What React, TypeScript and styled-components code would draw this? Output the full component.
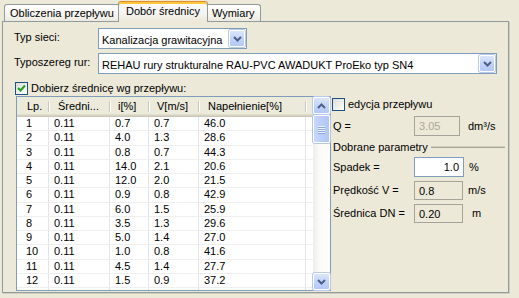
import React from "react";
import styled, { createGlobalStyle } from "styled-components";

type Row = [string, string, string, string, string];

const rows: Row[] = [
  ["1", "0.11", "0.7", "0.7", "46.0"],
  ["2", "0.11", "4.0", "1.3", "28.6"],
  ["3", "0.11", "0.8", "0.7", "44.3"],
  ["4", "0.11", "14.0", "2.1", "20.6"],
  ["5", "0.11", "12.0", "2.0", "21.5"],
  ["6", "0.11", "0.9", "0.8", "42.9"],
  ["7", "0.11", "6.0", "1.5", "25.9"],
  ["8", "0.11", "3.5", "1.3", "29.6"],
  ["9", "0.11", "5.0", "1.4", "27.0"],
  ["10", "0.11", "1.0", "0.8", "41.6"],
  ["11", "0.11", "4.5", "1.4", "27.7"],
  ["12", "0.11", "1.5", "0.9", "37.2"],
  ["13", "0.11", "11.5", "1.9", "22.0"],
];

type Col = { title: string; w: number; pad: number; hpad: number };
const cols: Col[] = [
  { title: "Lp.", w: 32, pad: 9, hpad: 10 },
  { title: "Średni...", w: 61, pad: 5, hpad: 9 },
  { title: "i[%]", w: 39, pad: 5, hpad: 8 },
  { title: "V[m/s]", w: 50, pad: 5, hpad: 8 },
  { title: "Napełnienie[%]", w: 107, pad: 5, hpad: 9 },
];

const GlobalStyle = createGlobalStyle`
  html, body {
    margin: 0;
    padding: 0;
    background: #ece9d8;
  }
  body {
    font-family: "Liberation Sans", Arial, sans-serif;
    font-size: 11px;
    color: #000;
  }
`;

const Window = styled.div`
  width: 519px;
  height: 298px;
  box-sizing: border-box;
  padding: 1px 0 0 2px;
  background: #ece9d8;
  overflow: hidden;
`;

const TabStrip = styled.div`
  display: flex;
  align-items: flex-end;
  height: 20px;
  padding-left: 2px;
  position: relative;
  z-index: 1;
`;

const Tab = styled.div<{ $active?: boolean }>`
  box-sizing: border-box;
  height: ${({ $active }) => ($active ? 21 : 17)}px;
  margin: 0 ${({ $active }) => ($active ? -2 : 0)}px
    ${({ $active }) => ($active ? -1 : 0)}px;
  padding: ${({ $active }) => ($active ? "2px 7px 0" : "1px 5px 0")};
  border: 1px solid #919b9c;
  border-bottom: none;
  border-radius: 3px 3px 0 0;
  white-space: nowrap;
  position: relative;
  z-index: ${({ $active }) => ($active ? 2 : 1)};
  background: ${({ $active }) =>
    $active
      ? "linear-gradient(#fcfcfe, #f4f3ee 60%, #ece9d8)"
      : "linear-gradient(#ffffff, #f3f2ec 70%, #ebe9e0)"};
  ${({ $active }) =>
    $active
      ? `border-top: 1px solid #e68b2c; box-shadow: inset 0 2px 0 #ffc73c;`
      : ""}
  line-height: 14px;
`;

const Panel = styled.div`
  box-sizing: border-box;
  width: 507px;
  height: 272px;
  border: 1px solid #919b9c;
  box-shadow: 1px 1px 0 #d0cebf;
  background: #ece9d8;
  padding: 6px 0 0 11px;
`;

const FormRow = styled.div<{ $gap?: number }>`
  display: flex;
  align-items: flex-start;
  height: 21px;
  margin-top: ${({ $gap }) => $gap ?? 0}px;
`;

const FormLabel = styled.div`
  width: 84px;
  padding-top: 3px;
  white-space: nowrap;
`;

const Combo = styled.div<{ $w: number }>`
  box-sizing: border-box;
  width: ${({ $w }) => $w}px;
  height: 21px;
  border: 1px solid #7f9db9;
  background: #fff;
  display: flex;
  align-items: center;
  padding: 1px 1px 1px 3px;
`;

const ComboText = styled.span`
  flex: 1;
  padding-top: 2px;
  white-space: nowrap;
  overflow: hidden;
`;

const ArrowButton = styled.div<{ $w?: number; $h?: number }>`
  box-sizing: border-box;
  width: ${({ $w }) => $w ?? 16}px;
  height: ${({ $h }) => $h ?? 17}px;
  border: 1px solid #fff;
  border-radius: 2px;
  background: linear-gradient(#dbe5fc, #c3d4fa 50%, #b4c8f6);
  box-shadow: 0 0 0 1px #b9c9ef;
  display: flex;
  align-items: center;
  justify-content: center;
`;

const CheckRow = styled.div<{ $gap?: number; $indent?: number }>`
  display: flex;
  align-items: center;
  height: 14px;
  margin-top: ${({ $gap }) => $gap ?? 0}px;
  margin-left: ${({ $indent }) => $indent ?? 0}px;
  white-space: nowrap;
`;

const CheckBox = styled.div`
  box-sizing: border-box;
  width: 13px;
  height: 13px;
  border: 1px solid #1c5180;
  background: linear-gradient(135deg, #dcdcd7, #ffffff);
  margin-right: 3px;
  display: flex;
  align-items: center;
  justify-content: center;
`;

const Body = styled.div`
  display: flex;
  margin-top: 1px;
`;

const ListFrame = styled.div`
  box-sizing: border-box;
  display: flex;
  width: 315px;
  height: 195px;
  margin-left: 2px;
  border: 1px solid #7f9db9;
  background: #fff;
`;

const ListArea = styled.div`
  flex: 1;
  display: flex;
  flex-direction: column;
  overflow: hidden;
`;

const Header = styled.div`
  display: flex;
  height: 20px;
  flex-shrink: 0;
  background: #ebeadb;
  box-shadow: inset 0 -1px 0 #cbc7b8, inset 0 -2px 0 #d6d2c2,
    inset 0 -3px 0 #e2decd;
`;

const HeaderCell = styled.div<{ $w: number; $pad: number }>`
  box-sizing: border-box;
  width: ${({ $w }) => $w}px;
  flex-shrink: 0;
  padding-left: ${({ $pad }) => $pad}px;
  line-height: 19px;
  position: relative;
  white-space: nowrap;

  &::after {
    content: "";
    position: absolute;
    right: 0;
    top: 4px;
    bottom: 5px;
    width: 1px;
    background: #cbc7b8;
    box-shadow: 1px 0 0 #fff;
  }
`;

const Rows = styled.div`
  flex: 1;
  overflow: hidden;
`;

const DataRow = styled.div`
  display: flex;
  box-sizing: border-box;
  height: 14.25px;
  border-bottom: 1px solid #efefef;
`;

const Cell = styled.div<{ $w: number; $pad: number }>`
  box-sizing: border-box;
  width: ${({ $w }) => $w}px;
  flex-shrink: 0;
  padding-left: ${({ $pad }) => $pad}px;
  line-height: 13px;
  border-right: 1px solid #e4e4e4;
  white-space: nowrap;
`;

const ScrollBar = styled.div`
  width: 17px;
  display: flex;
  flex-direction: column;
  background: linear-gradient(90deg, #efeee7, #fbfbf9 40%, #fdfdfc);
`;

const ScrollTrack = styled.div`
  flex: 1;
  padding-top: 1px;
`;

const Thumb = styled.div`
  box-sizing: border-box;
  height: 28px;
  border: 1px solid #fff;
  border-radius: 2px;
  background: linear-gradient(90deg, #c9d8fc, #bacdf9 50%, #b0c6f7);
  box-shadow: 0 0 0 1px #b4c6ee;
  display: flex;
  flex-direction: column;
  align-items: center;
  justify-content: center;
  gap: 1px;
`;

const Grip = styled.div`
  width: 7px;
  height: 1px;
  background: #eef3fe;
  box-shadow: 0 1px 0 #8ca5da;
`;

const Side = styled.div`
  width: 173px;
  margin-left: 1px;
  display: flex;
  flex-direction: column;
`;

const FieldRow = styled.div<{ $gap: number }>`
  display: grid;
  grid-template-columns: 82px 53px auto;
  align-items: center;
  height: 20px;
  margin-top: ${({ $gap }) => $gap}px;
  white-space: nowrap;
`;

const FieldLabel = styled.div`
  padding-left: 1px;
`;

const Field = styled.div<{
  $w: number;
  $kind: "edit" | "disabled" | "readonly";
  $align?: "left" | "right";
}>`
  box-sizing: border-box;
  width: ${({ $w }) => $w}px;
  height: ${({ $kind }) => ($kind === "readonly" ? 19 : 20)}px;
  padding: 0 4px;
  line-height: 18px;
  text-align: ${({ $align }) => $align ?? "left"};
  border: 1px solid
    ${({ $kind }) => ($kind === "edit" ? "#7f9db9" : "#a5a39a")};
  background: ${({ $kind }) => ($kind === "edit" ? "#fff" : "#ece9d8")};
  color: ${({ $kind }) => ($kind === "disabled" ? "#aca899" : "#000")};
`;

const Unit = styled.div<{ $shift?: number }>`
  padding-left: ${({ $shift }) => $shift ?? 0}px;
`;

const GroupTitle = styled.div`
  display: flex;
  align-items: center;
  height: 14px;
  margin-top: 4px;
  padding-left: 1px;
  white-space: nowrap;
`;

const GroupLine = styled.div`
  flex: 1;
  height: 0;
  margin-left: 3px;
  border-top: 1px solid #d0d0bf;
  border-bottom: 1px solid #a9a796;
`;

const Chevron = ({ up }: { up?: boolean }) => (
  <svg width="9" height="6" viewBox="0 0 9 6">
    <polyline
      points={up ? "1,5 4.5,1.5 8,5" : "1,1 4.5,4.5 8,1"}
      fill="none"
      stroke="#4d6185"
      strokeWidth="2"
    />
  </svg>
);

const Tick = () => (
  <svg width="9" height="9" viewBox="0 0 9 9">
    <polyline
      points="1,4 3.5,6.5 8,1.5"
      fill="none"
      stroke="#21a121"
      strokeWidth="2"
    />
  </svg>
);

const App = () => {
  return (
    <Window>
      <GlobalStyle />
      <TabStrip>
        <Tab>Obliczenia przepływu</Tab>
        <Tab $active>Dobór średnicy</Tab>
        <Tab>Wymiary</Tab>
      </TabStrip>
      <Panel>
        <FormRow>
          <FormLabel>Typ sieci:</FormLabel>
          <Combo $w={149}>
            <ComboText>Kanalizacja grawitacyjna</ComboText>
            <ArrowButton>
              <Chevron />
            </ArrowButton>
          </Combo>
        </FormRow>
        <FormRow $gap={4}>
          <FormLabel>Typoszereg rur:</FormLabel>
          <Combo $w={399}>
            <ComboText>
              REHAU rury strukturalne RAU-PVC AWADUKT ProEko typ SN4
            </ComboText>
            <ArrowButton>
              <Chevron />
            </ArrowButton>
          </Combo>
        </FormRow>
        <CheckRow $gap={7} $indent={1}>
          <CheckBox>
            <Tick />
          </CheckBox>
          Dobierz średnicę wg przepływu:
        </CheckRow>
        <Body>
          <ListFrame>
            <ListArea>
              <Header>
                {cols.map((c) => (
                  <HeaderCell key={c.title} $w={c.w} $pad={c.hpad}>
                    {c.title}
                  </HeaderCell>
                ))}
              </Header>
              <Rows>
                {rows.map((r) => (
                  <DataRow key={r[0]}>
                    {r.map((v, i) => (
                      <Cell key={i} $w={cols[i].w} $pad={cols[i].pad}>
                        {v}
                      </Cell>
                    ))}
                  </DataRow>
                ))}
              </Rows>
            </ListArea>
            <ScrollBar>
              <ArrowButton $w={17} $h={17}>
                <Chevron up />
              </ArrowButton>
              <ScrollTrack>
                <Thumb>
                  <Grip />
                  <Grip />
                  <Grip />
                  <Grip />
                </Thumb>
              </ScrollTrack>
              <ArrowButton $w={17} $h={17}>
                <Chevron />
              </ArrowButton>
            </ScrollBar>
          </ListFrame>
          <Side>
            <CheckRow $gap={1}>
              <CheckBox />
              edycja przepływu
            </CheckRow>
            <FieldRow $gap={5}>
              <FieldLabel>Q =</FieldLabel>
              <Field $w={46} $kind="disabled">
                3.05
              </Field>
              <Unit $shift={1}>dm³/s</Unit>
            </FieldRow>
            <GroupTitle>
              Dobrane parametry
              <GroupLine />
            </GroupTitle>
            <FieldRow $gap={3}>
              <FieldLabel>Spadek =</FieldLabel>
              <Field $w={50} $kind="edit" $align="right">
                1.0
              </Field>
              <Unit $shift={2}>%</Unit>
            </FieldRow>
            <FieldRow $gap={3}>
              <FieldLabel>Prędkość V =</FieldLabel>
              <Field $w={49} $kind="readonly">
                0.8
              </Field>
              <Unit $shift={1}>m/s</Unit>
            </FieldRow>
            <FieldRow $gap={3}>
              <FieldLabel>Średnica DN =</FieldLabel>
              <Field $w={49} $kind="readonly">
                0.20
              </Field>
              <Unit $shift={5}>m</Unit>
            </FieldRow>
          </Side>
        </Body>
      </Panel>
    </Window>
  );
};

export default App;
